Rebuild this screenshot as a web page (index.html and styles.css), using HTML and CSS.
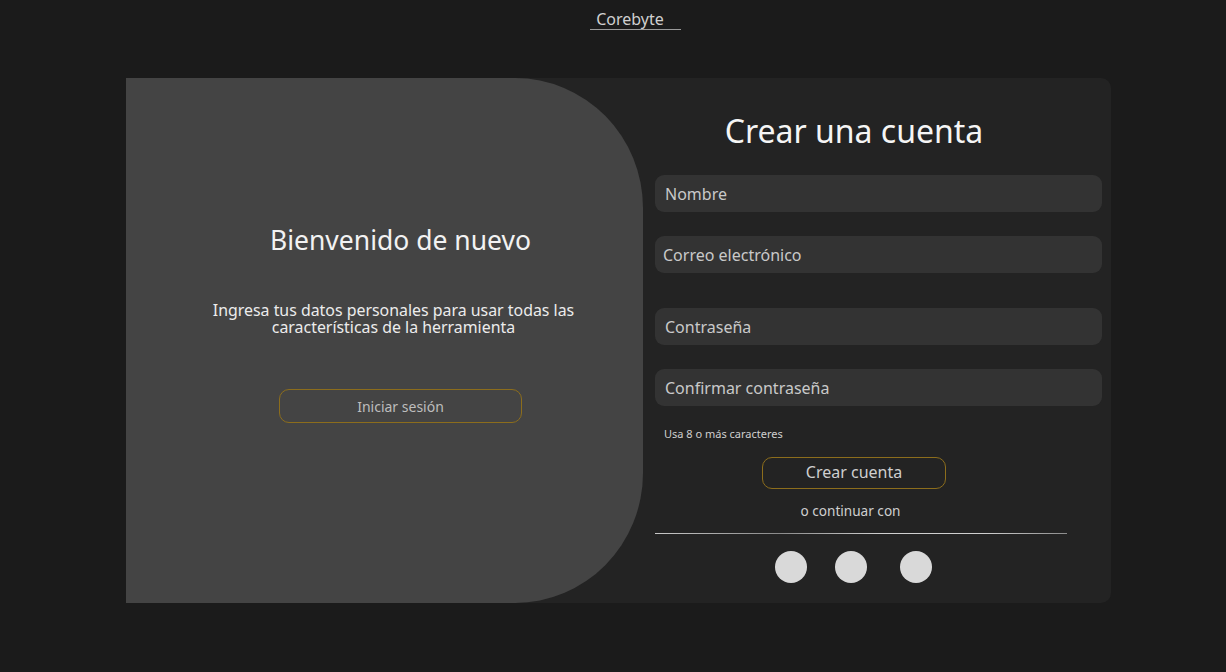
FILE: index.html
```html
<!DOCTYPE html>
<html lang="es">
<head>
<meta charset="utf-8">
<title>Corebyte</title>
<link rel="stylesheet" href="styles.css">
</head>
<body>
<header class="topbar"><span class="brand">Corebyte</span></header>
<main class="card">
  <section class="welcome">
    <h2 class="welcome-title">Bienvenido de nuevo</h2>
    <p class="welcome-text">Ingresa tus datos personales para usar todas las<br>características de la herramienta</p>
    <button class="btn-outline btn-login">Iniciar sesión</button>
  </section>
  <section class="signup">
    <h1 class="signup-title">Crear una cuenta</h1>
    <input class="field f-name" type="text" placeholder="Nombre">
    <input class="field f-mail" type="email" placeholder="Correo electrónico">
    <input class="field f-pass" type="password" placeholder="Contraseña">
    <input class="field f-confirm" type="password" placeholder="Confirmar contraseña">
    <p class="hint">Usa 8 o más caracteres</p>
    <button class="btn-outline btn-create">Crear cuenta</button>
    <p class="alt">o continuar con</p>
    <div class="divider"></div>
    <div class="socials">
      <span class="social"></span>
      <span class="social s2"></span>
      <span class="social s3"></span>
    </div>
  </section>
</main>
</body>
</html>
```
FILE: styles.css
```css
* { box-sizing: border-box; }
html, body { margin: 0; padding: 0; }
body {
  background: #1b1b1b;
  font-family: "Noto Sans", "Open Sans", sans-serif;
  color: #e6e6e6;
  height: 672px;
  overflow: hidden;
}
.topbar {
  display: flex;
  justify-content: center;
  padding-top: 10px;
  padding-left: 45px;
}
.brand {
  font-size: 16px;
  line-height: 19px;
  color: #d0d0d0;
  padding: 0 17px 0 6px;
  border-bottom: 1px solid #9a9a9a;
}
.card {
  width: 985px;
  height: 525px;
  margin: 48px 0 0 126px;
  background: #232323;
  border-radius: 0 10px 10px 0;
  display: flex;
}
.welcome {
  width: 517px;
  height: 100%;
  background: #444444;
  border-radius: 0 128px 128px 0 / 0 130px 130px 0;
  display: flex;
  flex-direction: column;
  align-items: center;
  padding-top: 146px;
  padding-left: 32px;
}
.welcome-title {
  margin: 0;
  font-size: 26.5px;
  line-height: 32px;
  font-weight: 400;
  color: #f2f2f2;
}
.welcome-text {
  margin: 46px 0 0 -14px;
  font-size: 15.9px;
  line-height: 17px;
  text-align: center;
  color: #ececec;
}
.btn-outline {
  background: transparent;
  border: 1px solid #8c6d1c;
  border-radius: 10px;
  font-family: inherit;
  color: #c4c4c4;
  padding: 0;
}
.btn-login {
  margin-top: 53px;
  width: 243px;
  height: 34px;
  font-size: 14px;
  color: #bdbdbd;
}
.signup {
  flex: 1;
  display: flex;
  flex-direction: column;
  padding: 33px 9px 0 12px;
}
.signup-title {
  margin: 0;
  width: 398px;
  text-align: center;
  font-size: 32px;
  line-height: 40px;
  font-weight: 400;
  color: #f5f5f5;
}
.field {
  width: 447px;
  height: 37px;
  border: none;
  outline: none;
  background: #333333;
  border-radius: 9px;
  padding: 0 10px;
  font-family: inherit;
  font-size: 16px;
  color: #d0d0d0;
}
.field::placeholder { color: #c9c9c9; }
.f-name { margin-top: 24px; }
.f-mail { margin-top: 24px; padding-left: 8px; }
.f-pass { margin-top: 35px; }
.f-confirm { margin-top: 24px; }
.hint {
  margin: 21px 0 0 9px;
  font-size: 11px;
  line-height: 14px;
  color: #cfcfcf;
}
.btn-create {
  margin: 16px 0 0 107px;
  width: 184px;
  height: 32px;
  font-size: 16px;
  line-height: 26px;
  padding-bottom: 3px;
  color: #cfcfcf;
}
.alt {
  margin: 12px 0 0;
  width: 391px;
  text-align: center;
  font-size: 13.6px;
  line-height: 19px;
  color: #cfcfcf;
}
.divider {
  margin-top: 13px;
  width: 412px;
  height: 1px;
  background: linear-gradient(90deg, #c8c8c8 0%, #8a8a8a 30%, #d0d0d0 55%, #cfcfcf 80%, #8c8c8c 100%);
}
.socials {
  display: flex;
  margin: 17px 0 0 120px;
}
.social {
  width: 32px;
  height: 32px;
  border-radius: 50%;
  background: #d9d9d9;
}
.s2 { margin-left: 28px; }
.s3 { margin-left: 33px; }
```
